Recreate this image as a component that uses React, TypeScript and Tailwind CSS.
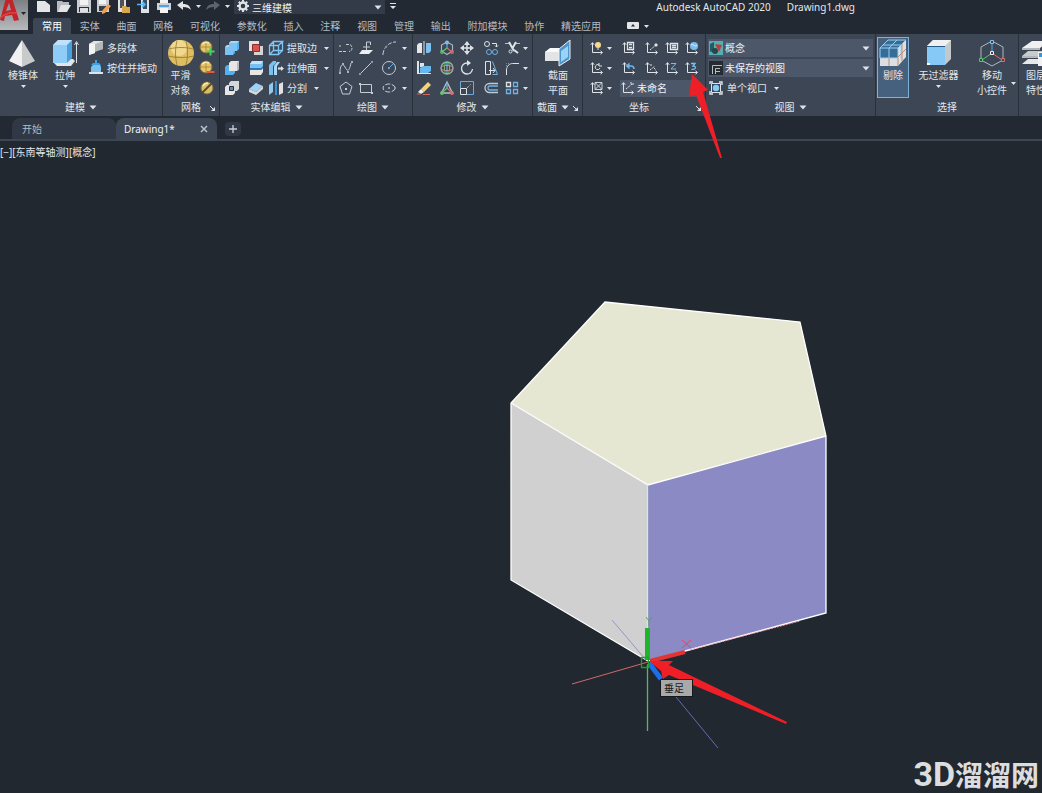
import React from "react";

type Kids = { children?: React.ReactNode };

/* ---------- drawing helpers ---------- */

const W = "#dfe3e8";
const B = "#7cc0ee";
const LB = "#a9d8f7";

function Ico({ children }: Kids) {
  return (
    <svg viewBox="0 0 16 16" className="h-4 w-4 shrink-0" fill="none" stroke={W} strokeWidth="1">
      {children}
    </svg>
  );
}

function Caret({ big = false }: { big?: boolean }) {
  return big ? (
    <svg viewBox="0 0 8 5" className="h-[5px] w-2 shrink-0" fill={W}><path d="M0.5 0.5h7L4 4.5z" /></svg>
  ) : (
    <svg viewBox="0 0 5 3" className="h-[3px] w-[5px] shrink-0" fill={W}><path d="M0 0h5L2.5 3z" /></svg>
  );
}

function Launcher() {
  return (
    <button aria-label="对话框启动器" className="absolute right-1 bottom-[5px]">
      <svg viewBox="0 0 6 6" className="h-[6px] w-[6px]" fill={W} stroke={W}><path d="M1 1l3 3" /><path d="M6 2v4H2z" stroke="none" /></svg>
    </button>
  );
}

function Axes({ children }: Kids) {
  return (
    <>
      <path d="M3.5 3v9.5H13M1.8 4.8L3.5 2.6l1.7 2.2M11.5 10.8l2 1.7-2 1.7" />
      {children}
    </>
  );
}

/* ---------- icons ---------- */

const icons: Record<string, React.ReactNode> = {
  polysolid: <g stroke="none"><path d="M1 4l5-3h9v8l-4 1V6L7 7v6l-6 2z" fill="#cfd1d3" /><path d="M1 4l6-1v10l-6 2z" fill="#f4f4f4" /><path d="M7 4l8-3v8l-8 3z" fill="#b4b7ba" /><path d="M1 4l5-3h9L7 4z" fill="#e2e3e4" /></g>,
  pressPull: <g stroke="none"><path d="M1 12h14v2H1z" fill={W} /><path d="M3 7l2-2h7l1 2v5H3z" fill={B} /><path d="M3 5h10l-2-2H9V0H7v3H5z" fill="#3aa0e8" /></g>,
  meshAdd: <g><circle cx="7" cy="7" r="6" fill="#e4c56b" stroke="#8b6f27" /><path d="M1 7h12M7 1v12" stroke="#9b7d30" strokeWidth=".7" /><path d="M3 4c2-2 5-2 7-1" stroke="#f8eab8" strokeWidth="1.500" /><path d="M11.500 7.500v8M7.500 11.500h8" stroke="#4fd05a" strokeWidth="2" /></g>,
  meshSub: <g><circle cx="7" cy="7" r="6" fill="#e4c56b" stroke="#8b6f27" /><path d="M1 7h12M7 1v12" stroke="#9b7d30" strokeWidth=".7" /><path d="M3 4c2-2 5-2 7-1" stroke="#f8eab8" strokeWidth="1.500" /><path d="M7.500 12h8" stroke="#e8563c" strokeWidth="2" /></g>,
  meshRefine: <g><circle cx="8" cy="8" r="6" fill="#d8bd6c" stroke="#85703a" /><path d="M3 13L13 3" stroke="#5b4d26" strokeWidth="2" /><path d="M4 6c1-2 3-3 5-3" stroke="#f8eab8" strokeWidth="1.500" /></g>,
  union: <g stroke="none"><path d="M5 3l2-2h8v8l-2 2H11v2l-2 2H1V7l2-2h2z" fill="#57b0ee" /><path d="M5 3l2-2h8l-2 2zM1 7l2-2h2v2z" fill={LB} /><path d="M5 3h8v8H9v4H1V7h4z" fill="#7cc3f4" /></g>,
  subtract: <g stroke="none"><path d="M1 7l2-2h8v8l-2 2H1z" fill="#57b0ee" /><path d="M5 3l2-2h8v8l-2 2H5z" fill="#e6e6e6" /><path d="M13 3l2-2v8l-2 2z" fill="#b5b8bc" /></g>,
  intersect: <g><path d="M1 7l2-2h8v8l-2 2H1z" fill="#e6e6e6" stroke="none" /><path d="M5 3l2-2h8v8l-2 2H5z" fill="#d4d6d8" stroke="none" /><path d="M5.500 6.500h4v4h-4z" fill="#5b88ac" stroke="#26323e" /></g>,
  interfere: <g><path d="M1 1h10v10H1z" fill="#e1e1e1" stroke="none" /><path d="M6 6h9v9H6z" fill="#d4d4d4" stroke="none" /><path d="M4.500 4.500h7v7h-7z" fill="#d9534f" stroke="#8d2d2d" /></g>,
  slice: <g stroke="none"><path d="M2 4l2-3h11v6l-2 2H2z" fill="#79c0f2" /><path d="M2 4l2-3h11l-2 3z" fill="#c3e4fa" /><path d="M2 10h11l2-2v4l-2 3H2z" fill="#e6e6e6" /><path d="M2 8h11l2-2v2l-2 2H2z" fill="#2f78b5" /></g>,
  thicken: <g stroke="none"><path d="M1 9l7-6 7 3-7 6z" fill="#9ed2f6" /><path d="M1 9l7 3 7-6v3l-7 6-7-3z" fill="#d9dadb" /></g>,
  extractEdges: <g stroke="#7fc6f6" strokeWidth="1.300"><path d="M1.500 5.500h9v9h-9zM1.500 5.500l4-4h9l-4 4M14.500 1.500v9l-4 4M5.500 1.500v9h9M5.500 10.500l-4 4" /></g>,
  extrudeFace: <g stroke="none"><path d="M1 5l4-4h3v2L5 6v9H1z" fill="#7cc0ee" /><path d="M6 6l3-4h3L9 6v9H6z" fill={LB} /><path d="M10 7.500h3V6l3 2.500-3 2.500V9.500h-3z" fill={W} /></g>,
  separate: <g stroke="none"><path d="M1 5l4-3v10l-4 3z" fill="#8fcaf3" /><path d="M7 1h2v14H7z" fill="#3e8fce" /><path d="M11 4l4-2v11l-4 2z" fill="#e1e1e1" /></g>,
  polyline: <g stroke="#c5ccd4"><path d="M1 11.500h8M8 4.500h3c4 0 4 7 0 7" strokeDasharray="3 1" /><path d="M1 6h2" /></g>,
  planar: <g><path d="M4 10h11l-4 4H1z" fill="#eceff1" stroke="none" /><path d="M8.500 10V2h4M12.500 2v3M5 7h7" stroke="#c5ccd4" /></g>,
  arc: <g stroke="#c5ccd4"><path d="M2 14C3 7 7 3 14 2" strokeDasharray="4 1.500" /><path d="M1 13h2v2H1zM4 6h2v2H4zM13 1h2v2h-2z" fill="#7f8b98" stroke="none" /></g>,
  spline: <g stroke="#c5ccd4"><path d="M2 13C2 4 5 3 7 7s4 6 6-4" /><path d="M1 12h2v2H1zM4 3h2v2H4zM9 11h2v2H9zM13 1h2v2h-2z" fill="#a7b0bb" stroke="none" /></g>,
  line: <g stroke="#c5ccd4"><path d="M2 14L14 2" /><path d="M1 13h2v2H1zM13 1h2v2h-2z" fill="#8d98a5" stroke="none" /></g>,
  circle: <g stroke="#c5ccd4"><circle cx="8" cy="8" r="6.500" /><path d="M8 8l4-4" stroke="#5aa9e6" /><path d="M7 7h2v2H7z" fill="#5aa9e6" stroke="none" /></g>,
  polygon: <g stroke="#c5ccd4"><path d="M8 2l6 4.500-2.500 7.500h-7L2 6.500z" /><path d="M7 8h2v2H7z" fill="#c5ccd4" stroke="none" /></g>,
  rect: <g stroke="#c5ccd4"><path d="M2.500 4.500h11v8h-11z" /><path d="M1 3h2v2H1zM13 12h2v2h-2z" fill="#c5ccd4" stroke="none" /></g>,
  ellipse: <g stroke="#c5ccd4"><ellipse cx="8" cy="8" rx="6" ry="4" strokeDasharray="5 1.500" /><path d="M7 7h2v2H7zM13 7h2v2h-2z" fill="#7f9dbd" stroke="none" /></g>,
  mirror3d: <g stroke="none"><path d="M1 5l2-2h3v10H1z" fill="#e6e6e6" /><path d="M10 3h5v8l-2 2h-3z" fill="#7cc0ee" /><path d="M7.500 1h1v14h-1z" fill={W} /></g>,
  gizmoMove: <g strokeWidth="1.200"><path d="M8 2l5.500 3v6L8 14.500 2.500 11V5z" stroke="#a8b4c0" /><path d="M8 8L3 12" stroke="#5ec66a" /><path d="M8 8l5 4" stroke="#dc6d6d" /><path d="M8 8V2" stroke="#5aa9e6" /><circle cx="3" cy="12" r="1.300" stroke="#5ec66a" /><circle cx="13" cy="12" r="1.300" stroke="#dc6d6d" /><circle cx="8" cy="2.500" r="1.300" stroke="#8cc6f0" /></g>,
  move: <g><path d="M8 3v10M3 8h10" strokeWidth="1.500" /><path d="M8 1l3 4H5zM8 15l3-4H5zM1 8l4-3v6zM15 8l-4-3v6z" fill={W} stroke="none" /></g>,
  copy: <g><circle cx="4" cy="4" r="2.500" /><path d="M9 3.500h4.500V7M12 5.500L13.500 7 15 5.500" /><g stroke="#6fb2e6"><circle cx="6" cy="12" r="2.500" /><circle cx="12" cy="12" r="2.500" /></g></g>,
  trim: <g><path d="M1 3.500h5M11 3.500h5" stroke="#9dc6e8" /><path d="M5 2l5 9M12 2L8 9" strokeWidth="2" /><circle cx="6.500" cy="11.500" r="1.500" /><path d="M10 10l4 3" strokeWidth="2" /></g>,
  align3d: <g stroke="none"><path d="M1 1h2v12H1zM4 3h4v4H4z" fill={W} /><path d="M4 8l3-2h8v5l-3 2H4z" fill="#67b7ef" /><path d="M1 13h14v1H1z" fill={W} /></g>,
  gizmoRotate: <g><circle cx="8" cy="8" r="6" stroke="#8bb9a3" strokeWidth="1.300" /><ellipse cx="8" cy="8" rx="2.600" ry="6" stroke="#67c06d" /><ellipse cx="8" cy="8" rx="6" ry="2.600" stroke="#d9807d" /><path d="M8 2v12" stroke="#84bce8" /></g>,
  rotate: <g strokeWidth="1.300"><path d="M8 3A5.500 5.500 0 1 0 13.500 9" /><path d="M8 0v6l4-3z" fill={W} stroke="none" /></g>,
  stretch: <g><path d="M2.500 1.500h5v13h-5z" /><path d="M9.500 1.500l5 13h-5" stroke="#6fb2e6" /><path d="M6 10.500h6M10 8l2 2.500-2 2.500" /></g>,
  fillet: <g><path d="M2.500 15V10c0-4 3-6.500 6-6.500H15" /><path d="M2.500 8V3.500H7" stroke="#5d9ac9" strokeDasharray="1 1" /></g>,
  erase: <g><path d="M5 9l7-7 3 3-7 7z" fill="#f2d27b" stroke="none" /><path d="M5 9l3 3-3 2-3-2z" fill="#f2efef" stroke="none" /><path d="M1 14h4M7 14.500h7" stroke="#d6675f" /></g>,
  gizmoScale: <g strokeWidth="1.300"><path d="M8 2L2.500 13h11z" stroke="#b8c2cc" /><path d="M8 8v-6" stroke="#6fb2e6" /><path d="M8 8l-5 5" stroke="#5ec66a" /><path d="M8 8l5 5" stroke="#dc6d6d" /><circle cx="3" cy="13" r="1.300" stroke="#5ec66a" /><circle cx="13" cy="13" r="1.300" stroke="#dc6d6d" /></g>,
  scale: <g><path d="M1.500 8V1.500h13v13H8" stroke="#6fa9d8" /><path d="M1.500 8.500h6v6h-6z" /><path d="M8 8l3.500-3.500" strokeDasharray="1 1" /></g>,
  offset: <g strokeWidth="1.300"><path d="M15 3.500H6.500a4.500 4.500 0 0 0 0 9H15" stroke="#c3cad2" /><path d="M15 6H7a2 2 0 0 0 0 4h8" stroke="#6fb2e6" /></g>,
  array: <g strokeWidth="1.300"><path d="M2.500 2.500h4v4h-4z" /><path d="M9.500 2.500h4v4h-4zM2.500 9.500h4v4h-4zM9.500 9.500h4v4h-4z" stroke="#6fb2e6" /></g>,
  ucsLight: <Axes><circle cx="9" cy="5" r="3" fill="#f6d98a" stroke="none" /><path d="M8 9h2" /></Axes>,
  ucsFace: <Axes><path d="M6.500 2.500h6v7h-6zM8 4.500h3M8 7.500h3" strokeWidth="1.300" /></Axes>,
  ucsOrigin: <Axes><path d="M6 10l6-5" strokeDasharray="2 1" /><path d="M11 4h2v2h-2z" fill={W} /></Axes>,
  ucsView: <Axes><path d="M6.500 3.500h7v6h-7zM8 5.500h4M8 7.500h4" strokeWidth="1.400" /></Axes>,
  ucsWorld: <Axes><circle cx="10" cy="6" r="4" fill="#79bced" stroke="none" /><path d="M7 5c2-2 4 3 6 0" stroke="#e8f3fb" /></Axes>,
  ucsX: <Axes><path d="M10 5a2.500 2.500 0 1 0 1 3M10 3v3h3" /></Axes>,
  ucsPrev: <Axes><path d="M6 6h4c2 0 3 1 3 3" stroke="#69b5ee" strokeWidth="1.600" /><path d="M4.500 6l4-3.500v7z" fill="#69b5ee" stroke="none" /></Axes>,
  ucsZAxis: <Axes><path d="M6 10l5-4M7 4v2M10 8l2 2" strokeDasharray="2 1" /></Axes>,
  ucsZ: <Axes><path d="M7 3.500h5L7 9h5" stroke="#7cbbea" /></Axes>,
  ucs3: <Axes><path d="M7 3.500h4L9 6c4 0 3 4-1.500 3.300" stroke="#7cc0ee" strokeWidth="1.300" /></Axes>,
  ucsObj: <Axes><path d="M6.500 3l6 6M12.500 3l-6 6M6 2.500h7v7H6z" strokeWidth=".9" /></Axes>,
  ucsNamed: <Axes><path d="M6 9l6-5M10 3h3v3" strokeDasharray="2 1" /></Axes>,
  style: <g stroke="none"><path d="M1 1h14v14H1z" fill="#58adb3" /><path d="M2 4l4-2v9l-4 1z" fill="#1e5c66" /><circle cx="7" cy="11" r="3" fill="#26464e" /><path d="M7 4l7 1-3 7z" fill="#bd3b3b" /></g>,
  view: <g><path d="M1 1h14v14H1z" fill="#262b31" stroke="none" /><path d="M4.500 14V5.500H14M7.500 14V8.500H12M8 11.500h4" stroke="#b7bcc2" /></g>,
  viewport: <g><path d="M3.500 3.500h9v9h-9z" fill="#284d6c" /><circle cx="8" cy="8" r="3.200" fill="#8cc9ee" stroke="none" /><path d="M2 4V2h3M11 2h3v3M14 11v3h-3M5 14H2v-3" strokeWidth="1.400" /></g>,
  qNew: <path d="M1 3h8l5 4v7H1z" fill="#e4e5e7" stroke="none" />,
  qOpen: <g stroke="none"><path d="M1 3h5l1 1h6v3H6l-3 7H1z" fill="#b7bbc0" /><path d="M5 7h10l-4 7H2z" fill="#e4e5e7" /></g>,
  qSave: <g stroke="none"><path d="M1 1h14v14H1z" fill="#c9ccd0" /><path d="M4 1h8v6H4z" fill="#f2f2f2" /><path d="M3 9h10v5H3z" fill="#2a3139" /><path d="M4 10h8v4H4z" fill="#dedede" /></g>,
  qSaveAs: <g stroke="none"><path d="M1 1h12v13H1z" fill="#c9ccd0" /><path d="M3 1h7v5H3z" fill="#f2f2f2" /><path d="M3 8h8v5H3z" fill="#363d46" /><path d="M6 13l6-7 3 2-6 7-3 1z" fill="#e9a458" /></g>,
  qPlotOpen: <g stroke="none"><path d="M2 0h8v14H2z" fill="#e0e0e0" /><path d="M4 1h4v9H4z" fill="#4a525c" /><path d="M6 8h4l1 1h3v6H6z" fill="#d7a64d" /></g>,
  qImport: <g><path d="M5 0h8v15H5z" fill="#dfe3e8" stroke="none" /><path d="M7 1h4v10H7z" fill="#37506a" stroke="none" /><path d="M1 6.500h8M6 3.500l3 3-3 3" stroke="#55b4f5" strokeWidth="1.600" /></g>,
  qPrint: <g stroke="none"><path d="M4 1h8v4H4z" fill="#f3f3f3" /><path d="M1 5h14v7H1z" fill="#cfd2d6" /><path d="M3 7h10v2H3z" fill="#4fa4e0" /><path d="M4 10h8v5H4z" fill="#f3f3f3" /></g>,
  qUndo: <path d="M1 7l6-4v3c5 0 7 2 8 6-2-2-4-3-8-3v3z" fill="#e4e5e7" stroke="none" />,
  qRedo: <path d="M15 7L9 3v3C4 6 2 8 1 12c2-2 4-3 8-3v3z" fill="#5b6570" stroke="none" />,
  gear: <g><circle cx="8" cy="7" r="3.500" strokeWidth="2.400" /><path d="M8 1v2M8 11v2M2 7h2M12 7h2M3.800 2.800l1.400 1.400M10.800 9.800l1.400 1.400M3.800 11.200l1.400-1.400M10.800 4.200l1.400-1.400" strokeWidth="2" /></g>,
};

/* ---------- ribbon parts ---------- */

function Tool({ name, label }: { name: string; label: string }) {
  return (
    <button aria-label={label} className="flex h-5 w-4 shrink-0 items-center justify-center">
      <Ico>{icons[name]}</Ico>
    </button>
  );
}

function Drop() {
  return (
    <button aria-label="更多选项" className="flex h-5 w-2 shrink-0 items-center justify-center">
      <Caret />
    </button>
  );
}

function LabelTool({ name, text, drop = false }: { name: string; text: string; drop?: boolean }) {
  return (
    <button className="flex h-5 items-center gap-[3px] whitespace-nowrap">
      <Ico>{icons[name]}</Ico>
      <span>{text}</span>
      {drop && <span className="ml-1"><Caret /></span>}
    </button>
  );
}

function Panel({ title, width, menu = true, launcher = false, children }: Kids & { title: string; width: string; menu?: boolean; launcher?: boolean }) {
  return (
    <section aria-label={title} className={`relative flex shrink-0 flex-col border-r border-[#28303a] ${width}`}>
      <div className="flex h-16 pt-1">{children}</div>
      <div className="flex h-[18px] items-center justify-center gap-1">
        <span>{title}</span>
        {menu && <Caret big />}
      </div>
      {launcher && <Launcher />}
    </section>
  );
}

function BigTool({ lines, drop = false, width, children }: Kids & { lines: string[]; drop?: boolean; width: string }) {
  return (
    <button className={`flex shrink-0 flex-col items-center whitespace-nowrap ${width}`}>
      <svg viewBox="0 0 30 30" className="h-[30px] w-[30px]" fill="none">{children}</svg>
      {lines.map((l) => <span key={l} className="h-[15px] leading-[15px]">{l}</span>)}
      {drop && <span className="pt-0.5"><Caret /></span>}
    </button>
  );
}

function Combo({ icon, label, options, className, arrow = true }: { icon: string; label: string; options: string[]; className: string; arrow?: boolean }) {
  return (
    <label className={`relative flex items-center ${className}`}>
      <Ico>{icons[icon]}</Ico>
      <select aria-label={label} className="h-full min-w-0 flex-1 appearance-none bg-transparent pr-3 pl-px text-[10px] text-[#eef1f4] outline-none">
        {options.map((o) => <option key={o}>{o}</option>)}
      </select>
      {arrow && <span className="pointer-events-none absolute right-[3px]"><Caret big /></span>}
    </label>
  );
}

const tabs = ["常用", "实体", "曲面", "网格", "可视化", "参数化", "插入", "注释", "视图", "管理", "输出", "附加模块", "协作", "精选应用"];

const quick = [
  ["qNew", "新建"], ["qOpen", "打开"], ["qSave", "保存"], ["qSaveAs", "另存为"],
  ["qPlotOpen", "从移动设备打开"], ["qImport", "导入"], ["qPrint", "打印"], ["qUndo", "放弃"],
];

function Header() {
  return (
    <header className="relative flex h-[34px] bg-[#222932]">
      <button aria-label="应用程序菜单" className="h-[30px] w-7 shrink-0 bg-linear-to-b from-[#7d8083] to-[#b8babc]">
        <svg viewBox="0 0 28 30" className="h-[30px] w-7">
          <path d="M0 20L6 -2h6l7 22-5 1-2-6-7 1-1 5z" fill="#c2242b" />
          <path d="M6 11l3-8 2 7z" fill="#96999c" />
          <path d="M0 18c6-5 10-6 17-5" stroke="#e4403f" strokeWidth="1.500" fill="none" />
          <path d="M21 12h5l-2.500 3z" fill="#20252b" />
        </svg>
      </button>
      <div className="flex min-w-0 flex-1 flex-col">
        <div className="flex h-[18px] items-start pl-2">
          <div className="flex h-3 items-center gap-1">
            {quick.map(([n, l]) => <Tool key={n} name={n} label={l} />)}
            <Caret />
            <Tool name="qRedo" label="重做" />
            <Caret />
          </div>
          <Combo icon="gear" label="工作空间" options={["三维建模"]} className="ml-1 h-[14px] w-[151px] bg-[#323b47] pl-px" />
          <button aria-label="自定义快速访问工具栏" className="flex h-3 w-4 items-center justify-center">
            <svg viewBox="0 0 8 8" className="h-2 w-2" fill={W}><path d="M1 1h6v1H1zM1 4h6L4 7z" /></svg>
          </button>
          <h1 className="ml-auto flex gap-4 pr-[187px] leading-[14px] whitespace-nowrap text-[#e3e7ec]">
            <span>Autodesk AutoCAD 2020</span>
            <span>Drawing1.dwg</span>
          </h1>
        </div>
        <div className="flex h-4 items-center">
          <nav className="ml-[5px] flex w-[576px] shrink-0 justify-between">
            {tabs.map((t, i) => (
              <button key={t} className={i === 0 ? "h-4 w-[38px] rounded-t-xs bg-[#3c4654] leading-4 text-white" : "h-4 px-2 leading-4 text-[#b4bbc4]"}>{t}</button>
            ))}
          </nav>
          <button aria-label="功能区显示" className="ml-[18px] flex items-center gap-[5px]">
            <svg viewBox="0 0 12 8" className="h-2 w-3"><rect width="12" height="7" rx="1" fill="#e4e5e7" /><path d="M4 4.500h4L6 2z" fill="#222932" /></svg>
            <Caret />
          </button>
        </div>
      </div>
    </header>
  );
}

function Ribbon() {
  return (
    <div className="flex h-[82px] overflow-hidden bg-[#3c4654] text-[#e3e7ec]">
      <Panel title="建模" width="w-[163px]">
        <BigTool lines={["棱锥体"]} drop width="w-[46px]">
          <path d="M14 2L1 23l13 6z" fill="#f1f1f1" /><path d="M14 2l13 21-13 6z" fill="#c9cacc" />
        </BigTool>
        <BigTool lines={["拉伸"]} drop width="w-[38px]">
          <path d="M3 24l4 4h14l4-5-2-2H5z" fill="#e4e5e7" /><path d="M3 7l5-5h14v18l-5 5H3z" fill="#4b9fda" /><path d="M3 7h14v18H3z" fill="#8fcdf8" /><path d="M3 7l5-5h14l-5 5z" fill="#bde2fa" /><path d="M26.500 25V5M24.500 7l2-3.500 2 3.500" stroke={W} />
        </BigTool>
        <div className="pl-1">
          <LabelTool name="polysolid" text="多段体" />
          <LabelTool name="pressPull" text="按住并拖动" />
        </div>
      </Panel>

      <Panel title="网格" width="w-[57px]" menu={false} launcher>
        <BigTool lines={["平滑", "对象"]} width="w-[35px]">
          <circle cx="15" cy="15" r="13" fill="#dfbe62" /><circle cx="13" cy="10" r="8" fill="#f0d98d" /><path d="M3 11c7-2 17-2 24 0M2 18c7 2 19 2 26 0M11 3c-2 8-2 16 0 24M20 3c2 8 2 16 0 24" stroke="#8f7734" strokeWidth=".8" />
        </BigTool>
        <div className="pl-px">
          <Tool name="meshAdd" label="提高平滑度" />
          <Tool name="meshSub" label="降低平滑度" />
          <Tool name="meshRefine" label="优化网格" />
        </div>
      </Panel>

      <Panel title="实体编辑" width="w-[114px]">
        <div className="pl-1">
          <Tool name="union" label="并集" /><Tool name="subtract" label="差集" /><Tool name="intersect" label="交集" />
        </div>
        <div className="pl-2">
          <Tool name="interfere" label="干涉" /><Tool name="slice" label="剖切" /><Tool name="thicken" label="加厚" />
        </div>
        <div className="pl-1">
          <LabelTool name="extractEdges" text="提取边" drop />
          <LabelTool name="extrudeFace" text="拉伸面" drop />
          <LabelTool name="separate" text="分割" drop />
        </div>
      </Panel>

      <Panel title="绘图" width="w-[79px]">
        <div className="grid grid-cols-[20px_23px_19px_8px] pl-1">
          <Tool name="polyline" label="多段线" /><Tool name="planar" label="平面曲面" /><Tool name="arc" label="圆弧" /><Drop />
          <Tool name="spline" label="样条曲线" /><Tool name="line" label="直线" /><Tool name="circle" label="圆" /><Drop />
          <Tool name="polygon" label="多边形" /><Tool name="rect" label="矩形" /><Tool name="ellipse" label="椭圆" /><Drop />
        </div>
      </Panel>

      <Panel title="修改" width="w-[120px]">
        <div className="grid grid-cols-[23px_20px_24px_21px_17px_8px] pl-[3px]">
          <Tool name="mirror3d" label="三维镜像" /><Tool name="gizmoMove" label="三维移动" /><Tool name="move" label="移动" /><Tool name="copy" label="复制" /><Tool name="trim" label="修剪" /><Drop />
          <Tool name="align3d" label="三维对齐" /><Tool name="gizmoRotate" label="三维旋转" /><Tool name="rotate" label="旋转" /><Tool name="stretch" label="拉伸" /><Tool name="fillet" label="圆角" /><Drop />
          <Tool name="erase" label="删除" /><Tool name="gizmoScale" label="三维缩放" /><Tool name="scale" label="缩放" /><Tool name="offset" label="偏移" /><Tool name="array" label="阵列" /><Drop />
        </div>
      </Panel>

      <Panel title="截面" width="w-[50px] pr-[9px]" launcher>
        <div className="pl-1">
          <BigTool lines={["截面", "平面"]} width="w-[42px]">
            <path d="M2 14l5-3h10v12H2z" fill="#e3e4e6" /><path d="M2 14l5-4h10v4z" fill="#fafafa" /><path d="M16 11l11-9v19l-11 7z" fill="#4d95cb" stroke="#eceff1" /><path d="M18 13l7-5v11l-7 5z" fill="#9bd2f7" />
          </BigTool>
        </div>
      </Panel>

      <Panel title="坐标" width="w-[123px] pr-[10px]" menu={false} launcher>
        <div className="w-[118px] shrink-0 pl-[6px]">
          <div className="grid grid-cols-[16px_16px_23px_20px_20px_16px]">
            <Tool name="ucsLight" label="UCS 图标" /><Drop /><Tool name="ucsFace" label="面" /><Tool name="ucsOrigin" label="原点" /><Tool name="ucsView" label="视图" /><Tool name="ucsWorld" label="世界" />
            <Tool name="ucsX" label="绕轴旋转" /><Drop /><Tool name="ucsPrev" label="上一个" /><Tool name="ucsZAxis" label="Z 轴矢量" /><Tool name="ucsZ" label="Z" /><Tool name="ucs3" label="三点" />
          </div>
          <div className="flex h-5 items-center">
            <Tool name="ucsObj" label="对象" /><Drop />
            <Combo icon="ucsNamed" label="命名 UCS" options={["未命名"]} className="ml-[7px] h-[17px] w-[77px] bg-[#4c586a]" arrow={false} />
          </div>
        </div>
      </Panel>

      <Panel title="视图" width="w-[170px]">
        <div className="flex-1 px-0.5">
          <div className="flex h-5 items-center"><Combo icon="style" label="视觉样式" options={["概念"]} className="h-[18px] flex-1 bg-[#4c586a]" /></div>
          <div className="flex h-5 items-center"><Combo icon="view" label="视图" options={["未保存的视图"]} className="h-[18px] flex-1 bg-[#4c586a]" /></div>
          <LabelTool name="viewport" text="单个视口" drop />
        </div>
      </Panel>

      <Panel title="选择" width="w-[143px]" menu={false}>
        <div className="-mt-px ml-px flex h-[61px] w-8 shrink-0 justify-center border border-[#7db1d6] bg-[#46617d]">
          <BigTool lines={["剔除"]} width="w-8">
            <path d="M2 10l8-8h18v15l-8 10H2z" fill="#346d98" /><path d="M2 20h9v8H2zM20 10l8-8v17l-8 9zM11 20h9v8h-9z" fill="#dedfe0" /><path d="M2 10h18M2 10l8-8h18l-8 8M2 10v10h18V10M11 10v10M5 7h18v13M11 10l8-8" stroke="#9ccdf0" /><path d="M20 19l8-8M24 6v17M11 20v8M20 20v8" stroke="#b98b78" />
          </BigTool>
        </div>
        <BigTool lines={["无过滤器"]} drop width="w-[59px]">
          <path d="M3 8l6-6h18v19l-6 6H3z" fill="#c5c8cb" /><path d="M3 8l6-6h18l-6 6z" fill="#f0f0f0" /><path d="M3 8h18v19H3z" fill="#86c8f6" /><path d="M3 8.500h18" stroke="#235a88" /><path d="M3 25h3v2H3z" fill="#fff" />
        </BigTool>
        <div className="relative">
          <BigTool lines={["移动", "小控件"]} width="w-12">
            <path d="M15 3l11 6v13l-11 6-11-6V9z" stroke="#aeb7c1" /><path d="M15 15V4" stroke="#5aa9e6" /><path d="M15 15L5 22" stroke="#56c766" /><path d="M15 15l10 7" stroke="#dc6d6d" /><path d="M13.500 13.500h3v3h-3z" stroke="#eceff1" fill="#3c4654" /><path d="M13.500 2.500h3v3h-3z" stroke="#7cc0ee" fill="#3c4654" /><path d="M2.500 20.500h3v3h-3z" stroke="#56c766" fill="#3c4654" /><path d="M24.500 20.500h3v3h-3z" stroke="#dc6d6d" fill="#3c4654" />
          </BigTool>
          <span className="absolute right-0 bottom-[13px] flex"><Caret /></span>
        </div>
      </Panel>

      <section aria-label="图层" className="flex min-w-0 flex-1 overflow-hidden pt-1 pl-0.5">
        <BigTool lines={["图层", "特性"]} width="w-[30px]">
          <path d="M1 10l10-7h17l-9 7z" fill="#f0f0f0" /><path d="M1 18l6-5h20l-8 5z" fill="#c9cbcd" /><path d="M1 26l6-5h20l-8 5z" fill="#e8e8e8" /><path d="M1 10h18v2H1zM1 18h18v2H1z" fill="#b3b6ba" /><path d="M17 14h12v14H17z" fill="#f2f2f2" /><path d="M18 15h11v4H18z" fill="#3b93d8" />
        </BigTool>
      </section>
    </div>
  );
}

function DocTabs() {
  return (
    <nav className="flex h-[25px] items-end border-b-2 border-[#3c4654] bg-[#222932] text-[#c8ced6]">
      <button className="ml-3 h-[21px] w-[104px] rounded-t-lg bg-[#2f3844] pl-[10px] text-left text-[#b4bbc4]">开始</button>
      <div className="flex h-[21px] w-[101px] items-center justify-between rounded-t-lg bg-[#3c4654] pr-[9px] pl-2">
        <button className="whitespace-nowrap text-[#f0f2f4]">Drawing1*</button>
        <button aria-label="关闭">
          <svg viewBox="0 0 8 8" className="h-2 w-2" stroke="#b9c0c8" strokeWidth="1.500"><path d="M1 1l6 6M7 1L1 7" /></svg>
        </button>
      </div>
      <button aria-label="新建选项卡" className="mb-[3px] ml-2 flex h-[14px] w-4 items-center justify-center rounded bg-[#2f3844]">
        <svg viewBox="0 0 8 8" className="h-2 w-2" stroke="#c8ced6" strokeWidth="1.300"><path d="M4 0v8M0 4h8" /></svg>
      </button>
    </nav>
  );
}

function Model() {
  return (
    <svg viewBox="0 141 1042 652" className="absolute top-0 left-0 h-[652px] w-[1042px]" fill="none" role="img" aria-label="五棱柱模型">
      <path d="M605 302L800 322 826 436 648 485 511 403z" fill="#e6e7d3" />
      <path d="M511 403L648 485V661L511 580z" fill="#d0d0d1" />
      <path d="M648 485L826 436V613L648 661z" fill="#8b8ac4" />
      <path d="M648 661L511 580V403L605 302 800 322 826 436V613L648 661M511 403L648 485 826 436" stroke="#fff" strokeWidth="1.300" />
      <path d="M647.500 485V630" stroke="#c9f0c6" strokeWidth="1.300" />
      <path d="M690 650L800 621" stroke="#e99aa5" strokeDasharray="2 1" />
      <path d="M572 684L648 662" stroke="#d0686c" />
      <path d="M647.500 664v67" stroke="#55b868" strokeWidth="1.300" />
      <path d="M612 620l34 40" stroke="#9a94c8" />
      <path d="M676 697l42 51" stroke="#6668b4" />
      <path d="M647.500 628v32" stroke="#1fb52a" strokeWidth="5" />
      <path d="M650 661l35-9" stroke="#e53232" strokeWidth="4" />
      <path d="M649 663l12 16" stroke="#1d6fe8" strokeWidth="5" />
      <path d="M682 640l9 8M691 640l-9 8" stroke="#d8486a" />
      <path d="M646 617l3 4 3-4M649 621v5" stroke="#5aa06c" />
      <path d="M641.500 657.500h7v10h-7z" stroke="#16a524" strokeWidth="1.300" />
    </svg>
  );
}

export default function App() {
  return (
    <div className="relative flex min-h-screen flex-col overflow-hidden bg-[#212830] font-['Noto_Sans','Noto_Sans_CJK_SC',sans-serif] text-[10px] leading-4">
      <Header />
      <Ribbon />
      <DocTabs />
      <main className="relative min-h-[652px] flex-1 overflow-hidden">
        <Model />
        <p className="pt-[3px] text-[#e3e6ea]">[−][东南等轴测][概念]</p>
        <svg viewBox="645 655 145 72" className="absolute top-[514px] left-[645px] h-[72px] w-[145px]" fill="#ee1f26" aria-hidden="true">
          <path d="M649 661h24l-4 4 118 57-1 2-117-49-6 4-2-8z" />
        </svg>
        <div className="absolute top-[538px] left-[660px] border border-[#15191e] bg-[#a9a9a9] pr-2 pl-[3px] text-[#16191d]">垂足</div>
        <div className="absolute right-[3px] bottom-0 flex items-baseline leading-9 font-bold text-[#dcdddf]">
          <span className="font-[Roboto,sans-serif] text-[34px]">3D</span>
          <span className="text-[28px]">溜溜网</span>
        </div>
      </main>
      <svg viewBox="685 70 42 92" className="pointer-events-none absolute top-[70px] left-[685px] h-[92px] w-[42px]" fill="#ee1f26" aria-hidden="true">
        <path d="M692 74l16 16-5 2 19 66h-2l-24-63-7 2z" />
      </svg>
    </div>
  );
}
